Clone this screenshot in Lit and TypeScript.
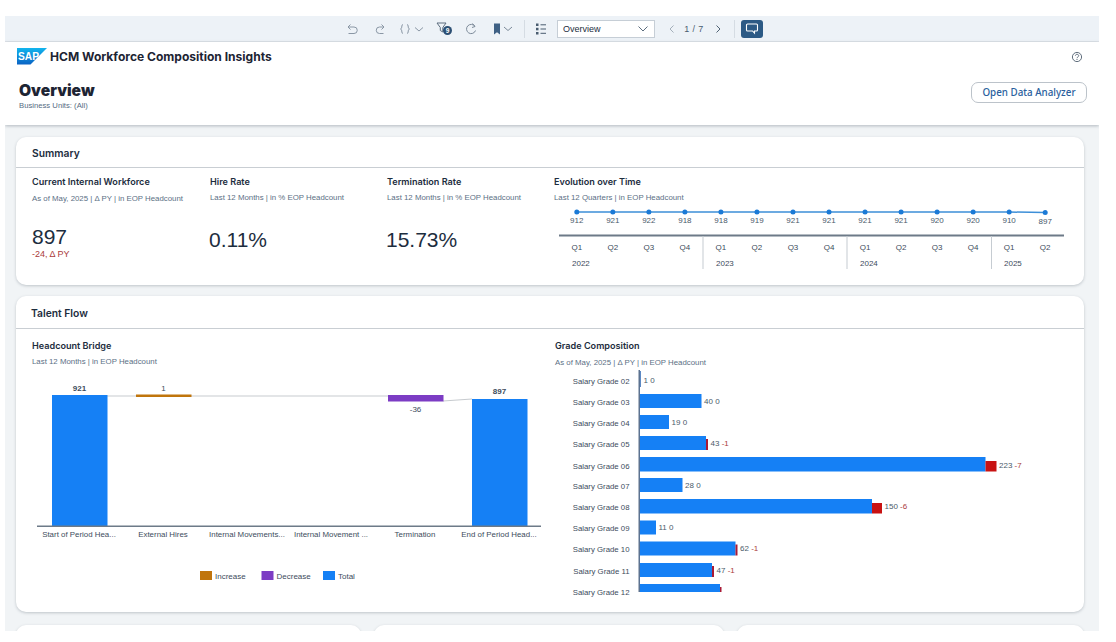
import { LitElement, html, css, svg, unsafeCSS } from "lit";
import { customElement } from "lit/decorators.js";

const SANS = unsafeCSS(`"Liberation Sans", Arial, sans-serif`);

const quarters = [912, 921, 922, 918, 918, 919, 921, 921, 921, 921, 920, 920, 910, 897];
const qLabels = ["Q1","Q2","Q3","Q4","Q1","Q2","Q3","Q4","Q1","Q2","Q3","Q4","Q1","Q2"];
const years: [string, number][] = [["2022", 572], ["2023", 716], ["2024", 860], ["2025", 1004]];

const grades = [
  { n: "02", c: 381, top: 371, h: 16, end: 641, red: 0, v: "1", d: "0" },
  { n: "03", c: 402, top: 394, h: 14, end: 701.5, red: 0, v: "40", d: "0" },
  { n: "04", c: 423, top: 415, h: 14, end: 669, red: 0, v: "19", d: "0" },
  { n: "05", c: 444, top: 436, h: 14, end: 706, red: 2, v: "43", d: "-1" },
  { n: "06", c: 466, top: 457, h: 14.5, end: 985.5, red: 11, v: "223", d: "-7" },
  { n: "07", c: 486, top: 478, h: 14, end: 682.5, red: 0, v: "28", d: "0" },
  { n: "08", c: 507, top: 499, h: 14.5, end: 872, red: 10, v: "150", d: "-6" },
  { n: "09", c: 528, top: 520.5, h: 14, end: 656, red: 0, v: "11", d: "0" },
  { n: "10", c: 549, top: 541.5, h: 14, end: 735.5, red: 2, v: "62", d: "-1" },
  { n: "11", c: 571, top: 563, h: 14, end: 712, red: 2, v: "47", d: "-1" },
  { n: "12", c: 592, top: 584, h: 8, end: 720, red: 1.5, v: "", d: "" },
];

const bridgeLabels: [string, number][] = [
  ["Start of Period Hea...", 79],
  ["External Hires", 163],
  ["Internal Movements...", 247],
  ["Internal Movement ...", 331],
  ["Termination", 415],
  ["End of Period Head...", 499],
];

@customElement("app-root")
export class AppRoot extends LitElement {
  static styles = css`
    :host {
      display: block;
      height: 642px;
      overflow: hidden;
      background: #fff;
      padding: 16px 17px 0 5px;
      box-sizing: border-box;
      font-family: ${SANS};
      color: #1d2d3e;
    }
    .frame { height: 615px; overflow: hidden; background: #f1f4f6; display: flex; flex-direction: column; }
    .toolbar {
      height: 26px; flex: none; background: #edf2f7; border-bottom: 1px solid #dfe4e9; box-sizing: border-box;
      display: grid; align-items: center; justify-items: center;
      grid-template-columns: 333px 28px 28px 34px 4px 26px 26px 4px 30px 12px 22px 5px 98px 6px 22px 22px 26px 6px 4px 22px;
    }
    .toolbar svg { display: block; }
    .sep { width: 1px; height: 18px; background: #d5dce3; }
    .select {
      width: 98px; height: 18px; box-sizing: border-box; background: #fff; border: 1px solid #c6ced6;
      display: flex; align-items: center; justify-content: space-between; padding: 0 5px;
      font-size: 9px; color: #1d2d3e;
    }
    .page { font-size: 9px; color: #4a5d70; white-space: nowrap; letter-spacing: .4px; }
    .chat { width: 22px; height: 18px; border-radius: 3px; background: #2c5a85; display: flex; align-items: center; justify-content: center; }
    .head { height: 83px; flex: none; background: #fff; box-shadow: 0 1px 3px rgba(60,75,90,.35); position: relative; display: flex; flex-direction: column; }
    .brand { display: flex; align-items: center; height: 30px; padding: 0 16px 0 12px; }
    .brand .logo { display: block; margin-top: -2px; }
    .app-title { font-family: "Inter", ${SANS}; font-weight: 700; font-size: 12.05px; margin-left: 3px; margin-top: -1px; color: #1d2433; white-space: nowrap; }
    .help { margin-left: auto; margin-right: 0; display: block; margin-top: -1px; }
    .titlebar { display: flex; align-items: flex-start; padding: 9px 12px 0 14px; justify-content: space-between; }
    h1 { margin: 0; font-family: "Inter", sans-serif; font-weight: 900; font-size: 15.6px; line-height: 20px; color: #1d2433; }
    .bu { font-size: 7.7px; color: #556b82; line-height: 10px; }
    .btn {
      width: 116px; height: 21px; box-sizing: border-box; margin-top: 1px; border: 1px solid #bcc3ca; border-radius: 7px; background: #fff;
      display: flex; align-items: center; justify-content: center;
      font-family: "Noto Sans", sans-serif; font-size: 9.8px; font-weight: 500; color: #2a5f9e; white-space: nowrap;
    }
    .content { flex: 1; padding: 12px 15px 0 11px; display: flex; flex-direction: column; gap: 11px; min-height: 0; }
    .card { background: #fff; border-radius: 10px; box-shadow: 0 1px 3px rgba(60,75,90,.28); flex: none; }
    .card-head { height: 28px; border-bottom: 1px solid #c9ced3; padding-left: 16px; padding-top: 2px; display: flex; align-items: center; font-family: "Inter", sans-serif; font-weight: 600; font-size: 10.3px; color: #1d2d3e; }
    .summary { height: 148px; }
    .talent { height: 316px; }
    .talent .card-head { height: 30px; padding-left: 15px; }
    .kpis { display: grid; grid-template-columns: 178px 177px 167px 1fr; padding: 7px 0 0 16px; }
    .kt { font-family: "Inter", sans-serif; font-weight: 600; font-size: 9.1px; line-height: 14px; color: #1d2d3e; white-space: nowrap; }
    .ks { font-size: 7.85px; line-height: 10px; margin-top: 4px; color: #5b6f85; white-space: nowrap; }
    .ks.low { margin-top: 5px; }
    .big { font-size: 21px; line-height: 24px; color: #1d2d3e; margin-top: 21px; }
    .big.mid { margin-top: 25px; margin-left: -1px; }
    .delta { font-size: 9px; line-height: 11px; color: #aa3b3b; }
    .cols { display: grid; grid-template-columns: 522px 1fr; }
    .col-l { padding: 10px 0 0 16px; }
    .col-r { padding: 10px 0 0 17px; }
    .trend, .bridge, .grade { display: block; }
    .trend { margin-top: 1px; }
    .bridge { margin-top: 5px; }
    .grade { margin-top: 2px; }
    .bottom { display: grid; grid-template-columns: 345px 350px 347px; gap: 13px; margin-top: 2px; }
    .bottom .card { height: 40px; }
    svg text { font-family: ${SANS}; }
  `;

  private icon(d: string, w = 14, h = 14, color = "#8a97a5") {
    return html`<svg width=${w} height=${h} viewBox="0 0 ${w} ${h}" fill="none" stroke=${color} stroke-width="1"><path d=${d}></path></svg>`;
  }

  private toolbar() {
    return html`<div class="toolbar">
      <span></span>
      ${this.icon("M5.5 2.500 3 5l2.500 2.500M3 5h6a3 3 0 0 1 0 6.500H3.500")}
      ${this.icon("M8.500 2.500 11 5 8.500 7.500M11 5H6.500a3.200 3.200 0 0 0 0 6.500h4")}
      ${this.icon("M5 2.500C3.500 2.500 4 5 3.500 6.200 3.200 6.800 2.500 7 2.500 7s.7.200 1 .800C4 9 3.500 11.500 5 11.500M9 2.500c1.500 0 1 2.500 1.500 3.700.3.600 1 .800 1 .800s-.7.200-1 .800C10 9 10.500 11.500 9 11.500M17 5.500l4 3.500 4-3.500", 26, 14)}
      <span></span>
      <svg width="20" height="16" viewBox="0 0 20 16" fill="none">
        <path d="M2 2h9L7.800 6.500V11L5.300 9.500V6.500z" stroke="#5c6d7e" stroke-width="1"></path>
        <circle cx="12.500" cy="9.500" r="4.500" fill="#2c4f73"></circle>
        <text x="12.500" y="11.800" font-size="6.500" font-weight="700" fill="#fff" text-anchor="middle">9</text>
      </svg>
      ${this.icon("M11 4.500A4.600 4.600 0 1 0 11.500 8.500M8.500 1.500 11 4.500 8 5.500", 14, 14, "#7c8a99")}
      <span></span>
      <svg width="24" height="14" viewBox="0 0 24 14" fill="none">
        <path d="M3 1.500h6v11L6 10.300 3 12.500z" fill="#3f6185"></path>
        <path d="M13 5l4 3.500L21 5" stroke="#7c8a99"></path>
      </svg>
      <div class="sep"></div>
      <svg width="14" height="14" viewBox="0 0 14 14" fill="#4a5d70">
        <rect x="2" y="1.500" width="2.500" height="2.500"></rect><rect x="2" y="5.800" width="2.500" height="2.500"></rect><rect x="2" y="10" width="2.500" height="2.500"></rect>
        <rect x="6.500" y="2.300" width="5.500" height="1"></rect><rect x="6.500" y="6.500" width="5.500" height="1"></rect><rect x="6.500" y="10.800" width="5.500" height="1"></rect>
      </svg>
      <span></span>
      <div class="select"><span>Overview</span>
        <svg width="12" height="8" viewBox="0 0 12 8" fill="none" stroke="#5c6d7e"><path d="M1.500 1.500 6 6l4.500-4.500"></path></svg>
      </div>
      <span></span>
      ${this.icon("M8.500 3.500 5 7l3.500 3.500", 14, 14, "#a4afba")}
      <span class="page">1 / 7</span>
      ${this.icon("M5.500 3.500 9 7l-3.500 3.500", 14, 14, "#4f6274")}
      <div class="sep"></div>
      <span></span>
      <div class="chat">
        <svg width="14" height="13" viewBox="0 0 14 13" fill="none" stroke="#fff" stroke-width="1.100"><path d="M2.500 2h9a1 1 0 0 1 1 1v5a1 1 0 0 1-1 1H9.500V11.200L7.500 9h-5a1 1 0 0 1-1-1V3a1 1 0 0 1 1-1z"></path></svg>
      </div>
    </div>`;
  }

  private header() {
    return html`<div class="head">
      <div class="brand">
        <svg class="logo" width="30" height="17" viewBox="0 0 30 17">
          <defs><linearGradient id="sapg" x1="0" y1="0" x2="0" y2="1"><stop offset="0" stop-color="#12b5ee"></stop><stop offset="1" stop-color="#0a63c4"></stop></linearGradient></defs>
          <path d="M0 0H30L13.500 16.500H0z" fill="url(#sapg)"></path>
          <text x="1" y="12" font-size="11" font-weight="700" fill="#fff" textLength="21" lengthAdjust="spacingAndGlyphs">SAP</text>
        </svg>
        <span class="app-title">HCM Workforce Composition Insights</span>
        <svg class="help" width="12" height="12" viewBox="0 0 12 12" fill="none" stroke="#4f5f6f" stroke-width=".9">
          <circle cx="6" cy="6" r="4.600"></circle>
          <path d="M4.400 4.700C4.500 3.700 5.200 3.300 6 3.300c1 0 1.700.6 1.700 1.400 0 1.200-1.700 1.300-1.700 2.500M6 8v1"></path>
        </svg>
      </div>
      <div class="titlebar">
        <div><h1>Overview</h1><div class="bu">Business Units: (All)</div></div>
        <div class="btn">Open Data Analyzer</div>
      </div>
    </div>`;
  }

  private trend() {
    const xs = quarters.map((_, i) => 576.8 + i * 36.03);
    const ys = quarters.map((_, i) => (i === 13 ? 213.6 : 213));
    const pts = xs.map((x, i) => `${x},${ys[i]}`).join(" ");
    return html`<svg class="trend" width="530" height="74" viewBox="554 205 530 74">
      <polyline points=${pts} fill="none" stroke="#3d8fd8" stroke-width="1.500"></polyline>
      ${xs.map((x, i) => svg`
        <circle cx=${x} cy=${ys[i]} r="2.500" fill="#1b7ad6"></circle>
        <text x=${x} y=${i === 13 ? 224.5 : 224} font-size="8" fill="#4a5a6a" text-anchor="middle">${quarters[i]}</text>
        <text x=${x} y="251" font-size="8" fill="#3d4c5c" text-anchor="middle">${qLabels[i]}</text>`)}
      <rect x="559" y="235.500" width="505" height="2" fill="#6d7a88"></rect>
      ${[702.5, 846.5, 991].map((x) => svg`<rect x=${x} y="237" width="1" height="33" fill="#c6ccd2"></rect>`)}
      ${years.map(([t, x]) => svg`<text x=${x} y="266.500" font-size="8" fill="#3d4c5c">${t}</text>`)}
    </svg>`;
  }

  private bridge() {
    return html`<svg class="bridge" width="520" height="228" viewBox="32 372 520 228">
      <path d="M107 396H388M443 401 472 399" stroke="#c7cbcf" fill="none"></path>
      <rect x="52" y="395" width="55.500" height="131" fill="#1580f5"></rect>
      <rect x="136" y="394.500" width="55.500" height="2.500" fill="#c0750c"></rect>
      <rect x="388" y="395" width="55.500" height="6.500" fill="#7c3cc4"></rect>
      <rect x="472" y="399" width="55.500" height="127" fill="#1580f5"></rect>
      <rect x="37" y="525.500" width="504" height="1.500" fill="#6d7a88"></rect>
      <text x="79.500" y="391" font-size="8" font-weight="700" fill="#3d4c5c" text-anchor="middle">921</text>
      <text x="163.500" y="391" font-size="8" fill="#3d4c5c" text-anchor="middle">1</text>
      <text x="415.500" y="412" font-size="8" fill="#3d4c5c" text-anchor="middle">-36</text>
      <text x="499.500" y="394" font-size="8" font-weight="700" fill="#3d4c5c" text-anchor="middle">897</text>
      ${bridgeLabels.map(([t, x]) => svg`<text x=${x} y="537" font-size="7.900" fill="#3d4c5c" text-anchor="middle">${t}</text>`)}
      <rect x="200" y="571" width="12" height="9" fill="#c0750c"></rect>
      <text x="215" y="578.500" font-size="8" fill="#3d4c5c">Increase</text>
      <rect x="261.500" y="571" width="12" height="9" fill="#7c3cc4"></rect>
      <text x="276.500" y="578.500" font-size="8" fill="#3d4c5c">Decrease</text>
      <rect x="323" y="571" width="12" height="9" fill="#1580f5"></rect>
      <text x="338" y="578.500" font-size="8" fill="#3d4c5c">Total</text>
    </svg>`;
  }

  private grade() {
    return html`<svg class="grade" width="530" height="232" viewBox="555 370 530 232">
      ${grades.map((g) => {
        const redH = g.red > 5 ? g.h - 4 : g.h - 3;
        const txt = g.end + g.red + 2.5;
        return svg`
        <text x="629.500" y=${g.c + 2.8} font-size="7.800" fill="#3d4c5c" text-anchor="end">Salary Grade ${g.n}</text>
        <rect x="640" y=${g.top} width=${g.end - 640} height=${g.h} fill=${g.v === "1" ? "#5d89c4" : "#1580f5"}></rect>
        ${g.red ? svg`<rect x=${g.end} y=${g.top + g.h - redH} width=${g.red} height=${redH} fill=${g.red > 5 ? "#c81212" : "#a81a36"}></rect>` : ""}
        ${g.v ? svg`<text x=${txt} y=${g.c + 1.5} font-size="8" fill="#4a5a6a">${g.v} <tspan fill=${g.d === "0" ? "#4a5a6a" : "#aa3b3b"}>${g.d}</tspan></text>` : ""}`;
      })}
      <rect x="638.500" y="370" width="1.500" height="222" fill="#5c7290"></rect>
    </svg>`;
  }

  render() {
    return html`<div class="frame">
      ${this.toolbar()}
      ${this.header()}
      <div class="content">
        <section class="card summary">
          <div class="card-head">Summary</div>
          <div class="kpis">
            <div>
              <div class="kt">Current Internal Workforce</div>
              <div class="ks low">As of May, 2025 | Δ PY | in EOP Headcount</div>
              <div class="big">897</div>
              <div class="delta">-24, Δ PY</div>
            </div>
            <div>
              <div class="kt">Hire Rate</div>
              <div class="ks">Last 12 Months | in % EOP Headcount</div>
              <div class="big mid">0.11%</div>
            </div>
            <div>
              <div class="kt">Termination Rate</div>
              <div class="ks">Last 12 Months | in % EOP Headcount</div>
              <div class="big mid">15.73%</div>
            </div>
            <div>
              <div class="kt">Evolution over Time</div>
              <div class="ks">Last 12 Quarters | in EOP Headcount</div>
              ${this.trend()}
            </div>
          </div>
        </section>
        <section class="card talent">
          <div class="card-head">Talent Flow</div>
          <div class="cols">
            <div class="col-l">
              <div class="kt">Headcount Bridge</div>
              <div class="ks">Last 12 Months | in EOP Headcount</div>
              ${this.bridge()}
            </div>
            <div class="col-r">
              <div class="kt">Grade Composition</div>
              <div class="ks low">As of May, 2025 | Δ PY | in EOP Headcount</div>
              ${this.grade()}
            </div>
          </div>
        </section>
        <div class="bottom">
          <div class="card"></div><div class="card"></div><div class="card"></div>
        </div>
      </div>
    </div>`;
  }
}
